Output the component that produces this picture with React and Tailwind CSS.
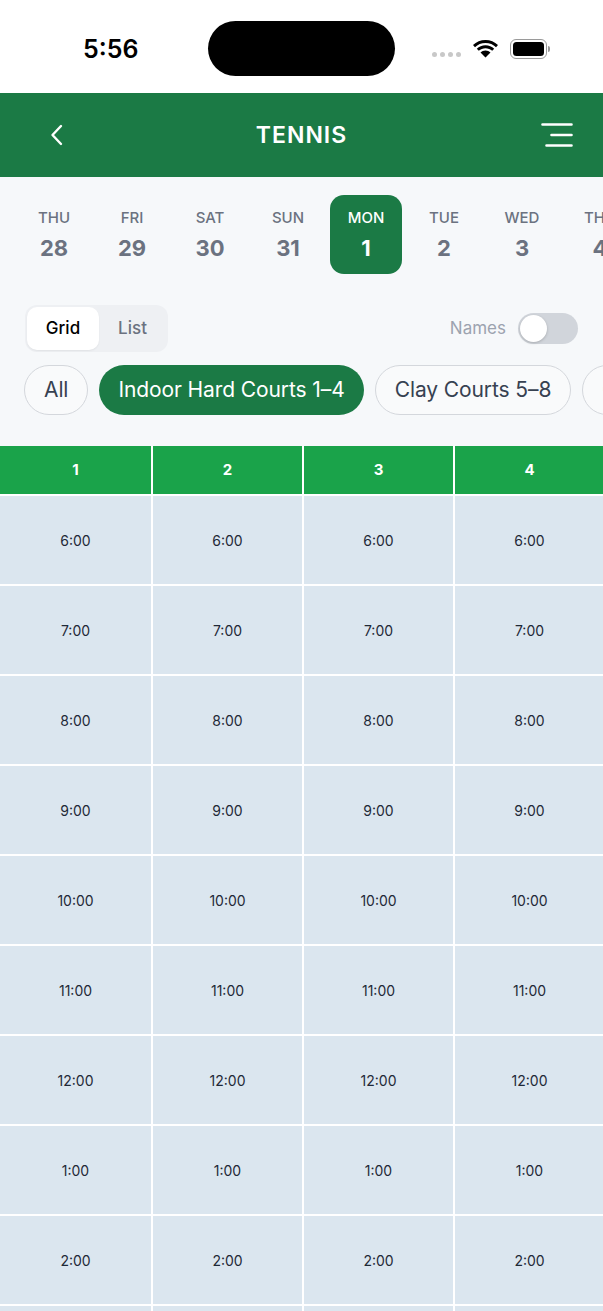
import React, { useState } from "react";

const days = [
  { d: "THU", n: 28 },
  { d: "FRI", n: 29 },
  { d: "SAT", n: 30 },
  { d: "SUN", n: 31 },
  { d: "MON", n: 1 },
  { d: "TUE", n: 2 },
  { d: "WED", n: 3 },
  { d: "THU", n: 4 },
];

const courts = [1, 2, 3, 4];
const times = ["6:00", "7:00", "8:00", "9:00", "10:00", "11:00", "12:00", "1:00", "2:00", "3:00"];

function StatusBar() {
  return (
    <div className="relative h-[93px] bg-white">
      <span className="absolute left-[83px] top-[33px] text-[25px] font-semibold leading-[32px] text-black">
        5:56
      </span>
      <div className="absolute left-[208px] top-[21px] h-[55px] w-[187px] rounded-full bg-black" />
      <div className="absolute left-[432px] top-[52px] flex gap-[3px]">
        {[0, 1, 2, 3].map((i) => (
          <span key={i} className="h-[5px] w-[5px] rounded-full bg-[#c8c8c8]" />
        ))}
      </div>
      <svg className="absolute left-[473px] top-[39px]" width="25" height="19" viewBox="0 0 25 19">
        <path d="M12.5 4C16.6 4 20.3 5.6 23 8.2L25 6.1C21.7 3 17.3 1.1 12.5 1.1S3.3 3 0 6.1L2 8.2C4.7 5.6 8.4 4 12.5 4Z" fill="#000" />
        <path d="M12.5 9.2C15.1 9.2 17.4 10.2 19.2 11.8L21.2 9.8C18.9 7.6 15.9 6.3 12.5 6.3S6.1 7.6 3.8 9.8L5.8 11.8C7.6 10.2 9.9 9.2 12.5 9.2Z" fill="#000" />
        <path d="M12.5 14.4C13.7 14.4 14.7 14.8 15.5 15.5L12.5 18.6 9.5 15.5C10.3 14.8 11.3 14.4 12.5 14.4Z M12.5 11.5C14.5 11.5 16.2 12.2 17.5 13.5L15.5 15.5C14.7 14.8 13.7 14.4 12.5 14.4S10.3 14.8 9.5 15.5L7.5 13.5C8.8 12.2 10.5 11.5 12.5 11.5Z" fill="#000" />
      </svg>
      <div className="absolute left-[510px] top-[39px] flex items-center">
        <div className="h-[20px] w-[37px] rounded-[6px] border-[1.5px] border-[#9a9a9a] p-[2px]">
          <div className="h-full w-full rounded-[3.5px] bg-black" />
        </div>
        <div className="ml-[1px] h-[6px] w-[2px] rounded-r-full bg-[#9a9a9a]" />
      </div>
    </div>
  );
}

function Header() {
  return (
    <div className="grid h-[84px] grid-cols-[1fr_auto_1fr] items-center bg-[#1b7a45] px-[30px]">
      <div className="pl-[20px]">
        <svg width="14" height="22" viewBox="0 0 14 22" fill="none">
          <path d="M11 2 2.5 11 11 20" stroke="#fff" strokeWidth="2.4" strokeLinecap="round" strokeLinejoin="round" />
        </svg>
      </div>
      <h1 className="text-[23px] font-semibold tracking-[1px] text-white">TENNIS</h1>
      <div className="flex justify-end">
        <svg width="32" height="26" viewBox="0 0 32 26" fill="none">
          <path d="M1.5 2.5H30.5M10.5 13H30.5M5.5 23.5H30.5" stroke="#fff" strokeWidth="2.6" strokeLinecap="round" />
        </svg>
      </div>
    </div>
  );
}

function DateStrip({ selected, onSelect }) {
  return (
    <div className="flex gap-[6px] overflow-hidden pl-[18px] pt-[18px]">
      {days.map((day, i) => {
        const active = i === selected;
        return (
          <button
            key={i}
            onClick={() => onSelect(i)}
            className={
              "flex h-[79px] w-[72px] shrink-0 flex-col items-center rounded-[14px] pt-[13px] " +
              (active ? "bg-[#1b7a45] text-white" : "text-[#6b7280]")
            }
          >
            <span className="text-[15px] font-medium leading-[20px]">{day.d}</span>
            <span className="mt-[6px] text-[22px] font-bold leading-[28px]">{day.n}</span>
          </button>
        );
      })}
    </div>
  );
}

function Controls({ view, setView, names, setNames }) {
  return (
    <div className="flex items-center justify-between pl-[25px] pr-[25px] pt-[31px]">
      <div className="flex h-[47px] rounded-[12px] bg-[#eef0f3] p-[2px]">
        {["Grid", "List"].map((v) => (
          <button
            key={v}
            onClick={() => setView(v)}
            className={
              "rounded-[10px] text-[17px] font-medium " +
              (view === v
                ? "w-[72px] bg-white text-black shadow-[0_1px_2px_rgba(0,0,0,0.06)]"
                : "w-[67px] text-[#6b7280]")
            }
          >
            {v}
          </button>
        ))}
      </div>
      <div className="flex items-center gap-[12px]">
        <span className="text-[17px] text-[#9ca3af]">Names</span>
        <button
          onClick={() => setNames(!names)}
          className={
            "flex h-[31px] w-[60px] items-center rounded-full p-[2px] " +
            (names ? "justify-end bg-[#1b7a45]" : "bg-[#d1d5db]")
          }
        >
          <span className="h-[27px] w-[27px] rounded-full bg-white shadow-[0_1px_3px_rgba(0,0,0,0.2)]" />
        </button>
      </div>
    </div>
  );
}

function Chips({ active, setActive }) {
  const chips = ["All", "Indoor Hard Courts 1–4", "Clay Courts 5–8", "Outdoor Hard Courts 9–12"];
  return (
    <div className="flex gap-[11px] overflow-hidden pl-[24px] pt-[13px]">
      {chips.map((c, i) => (
        <button
          key={c}
          onClick={() => setActive(i)}
          className={
            "h-[50px] shrink-0 whitespace-nowrap rounded-full px-[19px] text-[21px] tracking-[-0.1px] " +
            (active === i
              ? "bg-[#1b7a45] text-white"
              : "border-[1.5px] border-[#d4d7dc] bg-[#f9fafb] text-[#374151]")
          }
        >
          {c}
        </button>
      ))}
    </div>
  );
}

function CourtGrid() {
  return (
    <div className="mt-[31px] overflow-hidden">
      <div className="grid w-[604px] grid-cols-[151px_149px_149px_149px] gap-[2px] bg-white">
        {courts.map((c) => (
          <div key={c} className="flex h-[48px] items-center justify-center bg-[#1aa34a] text-[15px] font-bold text-white">
            {c}
          </div>
        ))}
        {times.map((t) =>
          courts.map((c) => (
            <div key={t + c} className="flex h-[88px] items-center justify-center bg-[#dbe6ef] text-[14px] text-[#1f2937]">
              {t}
            </div>
          ))
        )}
      </div>
    </div>
  );
}

export default function App() {
  const [selected, setSelected] = useState(4);
  const [view, setView] = useState("Grid");
  const [names, setNames] = useState(false);
  const [chip, setChip] = useState(1);

  return (
    <div className="h-[1311px] w-[603px] overflow-hidden bg-[#f6f8fa] font-['Inter',sans-serif]">
      <StatusBar />
      <Header />
      <DateStrip selected={selected} onSelect={setSelected} />
      <Controls view={view} setView={setView} names={names} setNames={setNames} />
      <Chips active={chip} setActive={setChip} />
      <CourtGrid />
    </div>
  );
}
